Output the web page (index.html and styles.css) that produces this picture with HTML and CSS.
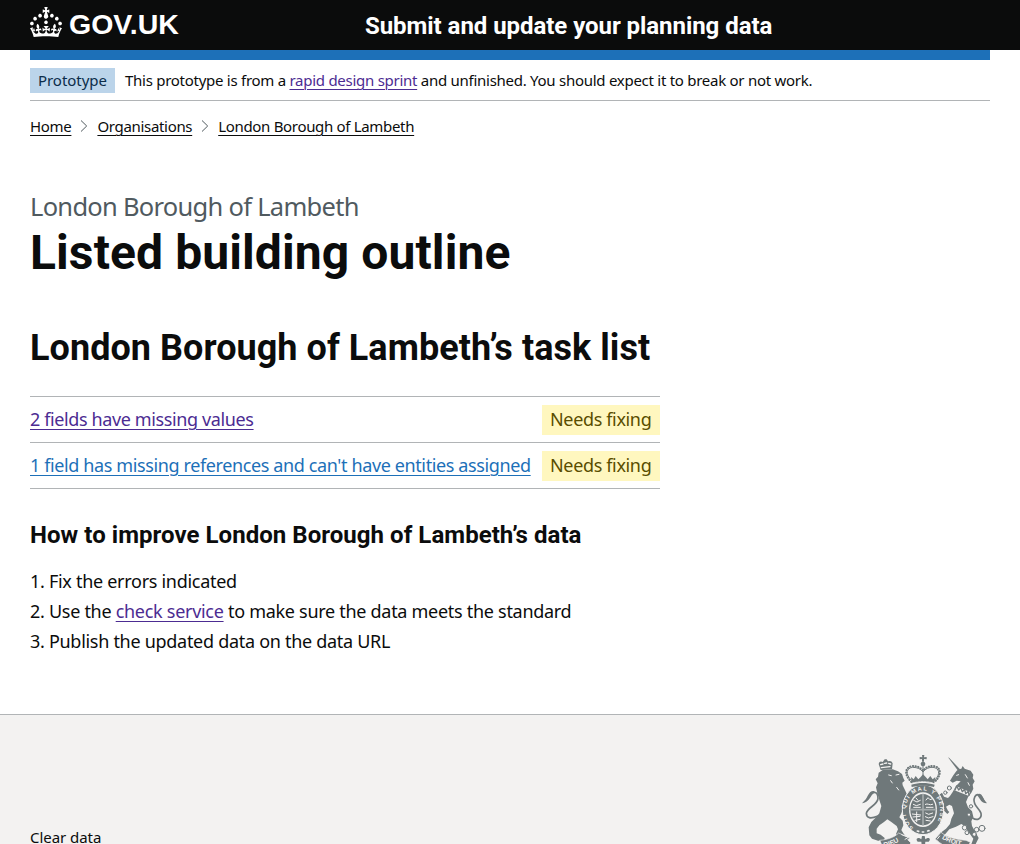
FILE: index.html
```html
<!DOCTYPE html>
<html lang="en">
<head>
<meta charset="utf-8">
<title>Listed building outline - Submit and update your planning data</title>
<link rel="stylesheet" href="styles.css">
</head>
<body>
<header class="header">
  <div class="header-inner">
    <a class="logo" href="#">
      <svg class="crown" viewBox="0 0 32 30" width="32" height="30" aria-hidden="true"><path fill="currentColor" d="M22.6 10.4c-1 .4-2-.1-2.4-1-.4-.9.1-2 1-2.4.9-.4 2 .1 2.4 1s-.1 2-1 2.4m-5.9 6.7c-.9.4-2-.1-2.4-1-.4-.9.1-2 1-2.4.9-.4 2 .1 2.4 1s-.1 2-1 2.4m10.8-3.7c-1 .4-2-.1-2.4-1-.4-.9.1-2 1-2.4.9-.4 2 .1 2.4 1s0 2-1 2.4m3.3 4.8c-1 .4-2-.1-2.4-1-.4-.9.1-2 1-2.4.9-.4 2 .1 2.4 1s-.1 2-1 2.4M17 4.7l2.3 1.2V2.5l-2.3.7-.2-.2.9-3h-3.4l.9 3-.2.2c-.1.1-2.3-.7-2.3-.7v3.4L15 4.7c.1.1.1.2.2.2l-1.3 4c-.1.2-.1.4-.1.6 0 1.1.8 2 1.9 2.2h.7c1-.2 1.9-1.1 1.9-2.1 0-.2 0-.4-.1-.6l-1.3-4c-.1-.2 0-.2.1-.3m-7.6 5.7c.9.4 2-.1 2.4-1 .4-.9-.1-2-1-2.4-.9-.4-2 .1-2.4 1s0 2 1 2.4m-5 3c.9.4 2-.1 2.4-1 .4-.9-.1-2-1-2.4-.9-.4-2 .1-2.4 1s.1 2 1 2.4m-3.2 4.8c.9.4 2-.1 2.4-1 .4-.9-.1-2-1-2.4-.9-.4-2 .1-2.4 1s0 2 1 2.4m14.8 11c4.4 0 8.6.3 12.3.8 1.1-4.5 2.4-7 3.7-8.8l-2.5-.9c.2 1.3.3 1.9 0 2.7-.4-.4-.8-1.1-1.1-2.3l-1.2 4c.7-.5 1.3-.8 2-.9-1.1 2.5-2.6 3.1-3.5 3-1.1-.2-1.7-1.2-1.5-2.1.3-1.2 1.5-1.5 2.1-.1 1.1-2.3-.8-3-2-2.3 1.9-1.9 2.1-3.5.6-5.6-2.1 1.6-2.1 3.2-1.2 5.5-1.2-1.4-3.2-.6-2.5 1.6.9-1.4 2.1-.5 1.9.8-.2 1.1-1.7 2.1-3.5 1.9-2.7-.2-2.9-2.1-2.9-3.6.7-.1 1.9.5 2.9 1.9l.4-4.3c-1.1 1.1-2.1 1.4-3.2 1.4.4-1.2 2.1-3 2.1-3h-5.4s1.7 1.9 2.1 3c-1.1 0-2.1-.2-3.2-1.4l.4 4.3c1-1.4 2.2-2 2.9-1.9-.1 1.5-.2 3.4-2.9 3.6-1.9.2-3.4-.8-3.5-1.9-.2-1.3 1-2.2 1.9-.8.7-2.3-1.2-3-2.5-1.6.9-2.2.9-3.9-1.2-5.5-1.5 2-1.3 3.7.6 5.6-1.2-.7-3.1 0-2 2.3.6-1.4 1.8-1.1 2.1.1.2.9-.3 1.9-1.5 2.1-.9.2-2.4-.5-3.5-3 .6 0 1.2.3 2 .9l-1.2-4c-.3 1.1-.7 1.9-1.1 2.3-.3-.8-.2-1.4 0-2.7l-2.9.9C1.3 23 2.6 25.5 3.7 30c3.7-.5 7.9-.8 12.3-.8"/></svg>
      <span class="logo-text">GOV.UK</span>
    </a>
    <a class="service" href="#">Submit and update your planning data</a>
  </div>
</header>
<div class="container">
  <div class="phase">
    <strong class="phase-tag"><span class="phase-tag-text">Prototype</span></strong>
    <span class="phase-text">This prototype is from a <a class="link visited" href="#">rapid design sprint</a> and unfinished. You should expect it to break or not work.</span>
  </div>
  <nav class="crumbs">
    <a class="crumb crumb-home" href="#">Home</a>
    <svg class="chevron" viewBox="0 0 8 14" width="8" height="14"><path d="M1 1.5 6.7 7 1 12.5" fill="none" stroke="#505a5f"/></svg>
    <a class="crumb crumb-orgs" href="#">Organisations</a>
    <svg class="chevron" viewBox="0 0 8 14" width="8" height="14"><path d="M1 1.5 6.7 7 1 12.5" fill="none" stroke="#505a5f"/></svg>
    <a class="crumb crumb-org" href="#">London Borough of Lambeth</a>
  </nav>
  <main class="main">
    <div class="caption"><span class="caption-text">London Borough of Lambeth</span></div>
    <h1 class="title">Listed building outline</h1>
    <h2 class="heading">London Borough of Lambeth’s task list</h2>
    <ul class="tasks">
      <li class="task"><a class="link visited task-link" href="#">2 fields have missing values</a><strong class="tag">Needs fixing</strong></li>
      <li class="task"><a class="link task-link" href="#">1 field has missing references and can't have entities assigned</a><strong class="tag">Needs fixing</strong></li>
    </ul>
    <h3 class="subheading">How to improve London Borough of Lambeth’s data</h3>
    <ol class="steps">
      <li class="step">Fix the errors indicated</li>
      <li class="step">Use the <a class="link visited" href="#">check service</a> to make sure the data meets the standard</li>
      <li class="step">Publish the updated data on the data URL</li>
    </ol>
  </main>
</div>
<footer class="footer">
  <div class="footer-inner">
    <a class="clear" href="#">Clear data</a>
    <svg class="crest" viewBox="0 15 375 306" width="125" height="102" fill="#6f787a" stroke-linecap="round" stroke-linejoin="round">
      <!-- lion -->
      <path d="M56 60L50 42Q52 32 62 36L68 28 74 28 78 34Q88 30 92 40L90 58Z"/>
      <path d="M56 44l7-2M68 40l6-1M80 40l6 2M58 53l26-3" stroke="#f3f2f1" stroke-width="4"/>
      <path d="M50 68L62 60 92 58 108 64 120 72 124 84 128 92 121 98 122 106 130 122 136 136 146 150 142 160 150 168 140 178 134 168 124 160 124 172 118 190 112 202 122 212 124 226 118 240 124 250 130 258 128 263 106 263 102 252 108 238 104 228 88 216 76 208 66 216 52 226 44 236 44 250 56 254 68 264 66 272 48 272 30 266 22 256 20 232 28 216 40 204 52 190 58 168 52 150 46 130 42 112 47 100 41 88 48 80Z"/>
      <path d="M80 75l8 2M102 75l9-2M86 92l5 7M104 112l6 8" fill="none" stroke="#f3f2f1" stroke-width="3"/>
      <path d="M48 198Q14 212 13 190C16 172 46 166 48 146Q48 126 36 127 26 130 16 148" fill="none" stroke="#6f787a" stroke-width="5"/>
      <path d="M0 160Q14 148 18 136 26 120 38 124 30 134 24 144 14 158 0 160Z"/>
      <!-- unicorn -->
      <path d="M258 22L262 24 298 62 291 66Z"/>
      <path d="M290 58L298 56 302 48 308 56 326 62 334 74 332 84 338 94 332 104 334 116 328 128 318 142 312 156 318 172 330 184 334 200 328 214 330 228 340 246 350 264 338 288 326 288 334 266 318 244 308 228 298 222 282 230 262 238 250 252 240 262 228 262 236 248 252 236 264 222 268 206 276 190 270 168 262 164 252 170 258 182 262 186 256 192 244 180 246 162 236 150 232 134 240 128 246 140 258 144 264 138 272 126 282 108 296 94 284 92 272 98 264 92 274 76 284 62Z"/>
      <path d="M284 76l6-2M310 74l6 10M318 98l4 8" stroke="#f3f2f1" stroke-width="3"/>
      <path d="M283 109L324 126 319 137 277 121Z" fill="#f3f2f1"/>
      <path d="M279 120l5-12 6 12 6-7 5 12 7-7 3 13 8-7 2 12" fill="none" stroke="#6f787a" stroke-width="4"/>
      <path d="M332 204C346 214 360 204 357 190 352 174 334 168 336 148Q340 130 352 135 360 140 366 154" fill="none" stroke="#6f787a" stroke-width="5"/>
      <path d="M345 134Q356 126 362 140 366 150 375 160 360 160 354 148Z"/>
      <g fill="#f3f2f1" stroke="#6f787a" stroke-width="3">
        <circle cx="308" cy="233" r="7"/><circle cx="315" cy="248" r="6"/><circle cx="344" cy="239" r="7"/><circle cx="360" cy="235" r="9"/><circle cx="337" cy="253" r="6"/><circle cx="321" cy="194" r="5"/><circle cx="327" cy="169" r="5"/><circle cx="262" cy="114" r="6"/><circle cx="250" cy="128" r="5"/>
      </g>
      <g transform="translate(-36 -15)">
        <!-- garter and shield -->
        <ellipse cx="219" cy="194" rx="62" ry="75" stroke="#f3f2f1" stroke-width="3"/>
        <ellipse cx="219" cy="194" rx="42" ry="52" fill="#f3f2f1"/>
        <ellipse cx="219" cy="194" rx="38" ry="47"/>
        <path id="garter" d="M191 249C158 222 162 176 182 155C204 130 234 130 256 155C276 176 278 222 246 250" fill="none"/>
        <text class="motto"><textPath href="#garter" textLength="268">SOIT QUI MAL Y PENSE</textPath></text>
        <path d="M219 148v92M181 194h76" stroke="#a4aaab" stroke-width="5"/>
        <path d="M191 166l10 5 10-5M190 178l9 4 12-4M198 159l6 7M191 187h20M228 165l6-7 6 6 8-3M226 178c8-5 11 5 22 0M229 187h20M187 207l25 3M189 216l21-2M195 226l15-3M200 201v29M227 204l9 4 12-4M226 215l9 4 14-4M228 226l13 2" fill="none" stroke="#f3f2f1" stroke-width="3"/>
        <path d="M202 258l4 1M217 261h4M233 258l4-1" stroke="#f3f2f1" stroke-width="5"/>
        <!-- royal crown -->
        <path d="M216 30h7l-1 7 8-1v7l-8-1v8h-6v-8l-7 1v-7l8 1z"/>
        <circle cx="219" cy="57" r="7"/>
        <path d="M184 111c-25-25-17-45 3-48 14-1 25 5 32 14 7-9 18-15 32-14 20 3 28 23 3 48" fill="none" stroke="#6f787a" stroke-width="6" stroke-dasharray="1 7"/>
        <path d="M184 106c-20-20-14-37 4-39 14 0 25 5 31 14 6-9 18-15 30-14 18 2 25 19 5 39M219 64v35" fill="none" stroke="#6f787a" stroke-width="3"/>
        <path d="M183 96l8 7 6-10 8 10 7-7 7-8 8 8 6 7 8-10 7 10 8-7-3 19c-23-6-46-6-68 0zM184 119c22-7 47-7 70 0l-2 7c-22-6-44-6-67 0z"/>
        <path d="M188 114c20-5 42-5 62 0" fill="none" stroke="#f3f2f1" stroke-width="3" stroke-dasharray="5 4"/>
        <!-- motto scroll -->
        <path d="M90 286c23-2 43-9 56-22l34 15-7 5 10 10-12 12c-33 15-67 15-94 10l18-15z" stroke="#f3f2f1" stroke-width="2"/>
        <path d="M255 282l18-20c22 18 51 22 75 24l13 6-11 19c-36 3-71-6-88-24z" stroke="#f3f2f1" stroke-width="2"/>
        <path d="M155 269l20 8-10 6M262 282l7-9" stroke="#f3f2f1" stroke-width="3" fill="none"/>
        <path id="dieu" d="M103 307Q138 298 164 279" fill="none"/>
        <text class="scroll-text"><textPath href="#dieu">DIEU</textPath></text>
        <path id="droit" d="M275 280Q308 301 350 304" fill="none"/>
        <text class="scroll-text"><textPath href="#droit">DROIT</textPath></text>
        <path d="M216 273h8l2 10c12-10 18 1 10 7h-10l-2 20h-8l-2-20h-11c-8-7 0-17 11-7z"/>
      </g>
    </svg>
  </div>
</footer>
</body>
</html>
```
FILE: styles.css
```css
* { box-sizing: border-box; }
html, body { margin: 0; height: 100%; overflow: hidden; }
body {
  display: flex;
  flex-direction: column;
  background: #fff;
  color: #0b0c0c;
  font-family: "Noto Sans", "Open Sans", sans-serif;
  font-size: 18px;
  letter-spacing: -0.35px;
}
a { color: inherit; text-decoration: none; white-space: nowrap; }
h1, h2, h3, ul, ol { margin: 0; padding: 0; }
h1, h2, h3, .service { font-family: Roboto, sans-serif; font-weight: 700; letter-spacing: 0; }
.header { background: #0b0c0c; color: #fff; height: 50px; flex: none; }
.header-inner { display: flex; padding: 0 30px; height: 50px; }
.logo { display: flex; width: 335px; padding-top: 7px; }
.logo-text { font: bold 28.5px/35px "Liberation Sans", sans-serif; margin-left: 7px; letter-spacing: 0; }
.service { font-size: 24px; line-height: 52px; letter-spacing: -0.05px; }
.container { margin: 0 30px; border-top: 10px solid #1d70b8; flex: none; }
.phase { display: flex; align-items: flex-start; height: 41px; padding-top: 8px; border-bottom: 1px solid #b1b4b6; font-size: 15px; line-height: 25px; letter-spacing: -0.27px; white-space: nowrap; }
.phase-tag { width: 85px; padding-left: 8px; background: #bbd4ea; color: #0c2d4a; font-weight: 400; margin-right: 10px; letter-spacing: -0.05px; }
.link { color: #1d70b8; text-decoration: underline; text-decoration-thickness: 1px; text-underline-offset: 3px; }
.visited { color: #4c2c92; }
.crumbs { display: flex; align-items: center; height: 20px; margin-top: 15px; font-size: 15px; line-height: 20px; letter-spacing: -0.32px; }
.crumb { text-decoration: underline; text-decoration-thickness: 1px; text-underline-offset: 3px; }
.chevron { margin: 0 9px; }
.main { padding-top: 55px; width: 630px; white-space: nowrap; }
.caption { color: #505a5f; font-size: 25.5px; line-height: 30px; letter-spacing: -0.72px; }
.title { font-size: 48px; line-height: 50px; margin-top: 7px; letter-spacing: 0.1px; }
.heading { font-size: 36px; line-height: 40px; margin-top: 50px; letter-spacing: 0.05px; }
.tasks { list-style: none; margin-top: 28px; border-top: 1px solid #b1b4b6; }
.task { display: flex; justify-content: space-between; align-items: center; height: 46px; border-bottom: 1px solid #b1b4b6; line-height: 28px; }
.task-link { margin-bottom: 1px; letter-spacing: -0.38px; }
.tag { width: 118px; height: 30px; padding-left: 8px; background: #fff7bf; color: #594d00; font-weight: 400; }
.subheading { font-size: 24px; line-height: 30px; margin-top: 31px; letter-spacing: 0.05px; }
.steps { list-style-position: inside; margin-top: 16px; line-height: 30px; letter-spacing: -0.29px; }
.footer { flex: 1; min-height: 0; overflow: hidden; background: #f3f2f1; border-top: 1px solid #b1b4b6; margin-top: 58px; }
.footer-inner { display: flex; justify-content: space-between; align-items: flex-start; padding: 40px 33px 0 30px; }
.clear { font-size: 15px; line-height: 20px; margin-top: 72px; letter-spacing: -0.05px; }
.crest { flex: none; }
.motto { font: bold 17px "Liberation Sans", sans-serif; letter-spacing: 0; fill: #f3f2f1; }
.scroll-text { font: bold 20px "Liberation Sans", sans-serif; letter-spacing: 0; fill: #f3f2f1; }
```
